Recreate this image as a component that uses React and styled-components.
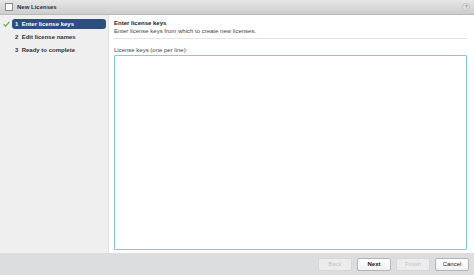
import React from "react";
import styled, { createGlobalStyle } from "styled-components";

const Global = createGlobalStyle`
    html, body {
        margin: 0;
        padding: 0;
        width: 474px;
        height: 275px;
        overflow: hidden;
        background: #fff;
    }
    body {
        font-family: "Liberation Sans", Arial, sans-serif;
        color: #222;
    }
`;

const Dialog = styled.div`
    width: 474px;
    height: 275px;
    display: flex;
    flex-direction: column;
    background: #fff;
`;

const TitleBar = styled.div`
    height: 14px;
    flex: none;
    display: flex;
    align-items: center;
    padding: 0 4px 0 5px;
    background: linear-gradient(#e6e6e6, #cdcdcd);
    border-bottom: 1px solid #b9b9b9;
    gap: 4px;
`;

const WindowIcon = styled.div`
    width: 6px;
    height: 6px;
    border: 1px solid #8a8a8a;
    background: #fafafa;
`;

const Title = styled.span`
    font-size: 6px;
    font-weight: bold;
    color: #333;
    flex: 1;
`;

const Help = styled.div`
    width: 6px;
    height: 6px;
    border-radius: 50%;
    border: 1px solid #c4c4c4;
    background: #e2e2e2;
    color: #8a8a8a;
    font-size: 4.5px;
    font-weight: bold;
    display: flex;
    align-items: center;
    justify-content: center;
`;

const Body = styled.div`
    flex: 1;
    display: flex;
    min-height: 0;
`;

const Sidebar = styled.div`
    width: 108px;
    flex: none;
    background: #efefef;
    border-right: 1px solid #e2e2e2;
    padding-top: 4px;
    display: flex;
    flex-direction: column;
    gap: 3px;
`;

const Step = styled.div`
    display: flex;
    align-items: center;
    height: 10px;
`;

const Check = styled.div`
    width: 12px;
    flex: none;
    display: flex;
    justify-content: center;
`;

const StepLabel = styled.div`
    width: 94px;
    height: 10px;
    box-sizing: border-box;
    display: flex;
    align-items: center;
    padding-left: 3px;
    border-radius: 3px;
    font-size: 6px;
    font-weight: bold;
    background: ${(p) => (p.active ? "#2d4f7f" : "transparent")};
    color: ${(p) => (p.active ? "#fff" : "#333")};
`;

const Content = styled.div`
    flex: 1;
    display: flex;
    flex-direction: column;
    padding: 4px 7px 3px 5px;
`;

const Heading = styled.div`
    font-size: 6px;
    font-weight: bold;
    color: #222;
    margin-top: 1px;
`;

const Sub = styled.div`
    font-size: 6px;
    color: #444;
    margin-top: 2px;
    padding-bottom: 4px;
    border-bottom: 1px solid #e4e4e4;
`;

const FieldLabel = styled.div`
    font-size: 6px;
    color: #444;
    margin-top: 8px;
    margin-bottom: 2px;
`;

const Keys = styled.textarea`
    flex: 1;
    resize: none;
    margin: 0;
    box-sizing: border-box;
    border: 1.5px solid #7ccfd2;
    border-radius: 1px;
    outline: none;
    background: #fff;
    font-family: "Liberation Sans", Arial, sans-serif;
    font-size: 6px;
`;

const Footer = styled.div`
    height: 22px;
    flex: none;
    background: #dcdde0;
    display: flex;
    justify-content: flex-end;
    align-items: center;
    gap: 5px;
    padding-right: 5px;
`;

const Button = styled.button`
    width: 34px;
    height: 13px;
    padding: 0;
    margin: 0;
    border: 1px solid ${(p) => (p.disabled ? "#d6d6d6" : "#b4b4b4")};
    border-radius: 2px;
    background: ${(p) => (p.disabled ? "#ececec" : "linear-gradient(#ffffff, #f1f1f1)")};
    color: ${(p) => (p.disabled ? "#c4c4c4" : "#222")};
    font-family: "Liberation Sans", Arial, sans-serif;
    font-size: 6px;
    font-weight: ${(p) => (p.primary ? "bold" : "normal")};
`;

const steps = ["1  Enter license keys", "2  Edit license names", "3  Ready to complete"];

export default function App() {
    return (
        <Dialog>
            <Global />
            <TitleBar>
                <WindowIcon />
                <Title>New Licenses</Title>
                <Help>?</Help>
            </TitleBar>
            <Body>
                <Sidebar>
                    {steps.map((s, i) => (
                        <Step key={s}>
                            <Check>
                                {i === 0 && (
                                    <svg width="7" height="6" viewBox="0 0 7 6">
                                        <path d="M0.6 3.2 L2.6 5.2 L6.4 0.8" fill="none" stroke="#6aa84f" strokeWidth="1.2" />
                                    </svg>
                                )}
                            </Check>
                            <StepLabel active={i === 0}>{s.replace(/  /, "\u00a0\u00a0")}</StepLabel>
                        </Step>
                    ))}
                </Sidebar>
                <Content>
                    <Heading>Enter license keys</Heading>
                    <Sub>Enter license keys from which to create new licenses.</Sub>
                    <FieldLabel>License keys (one per line):</FieldLabel>
                    <Keys />
                </Content>
            </Body>
            <Footer>
                <Button disabled>Back</Button>
                <Button primary>Next</Button>
                <Button disabled>Finish</Button>
                <Button>Cancel</Button>
            </Footer>
        </Dialog>
    );
}
